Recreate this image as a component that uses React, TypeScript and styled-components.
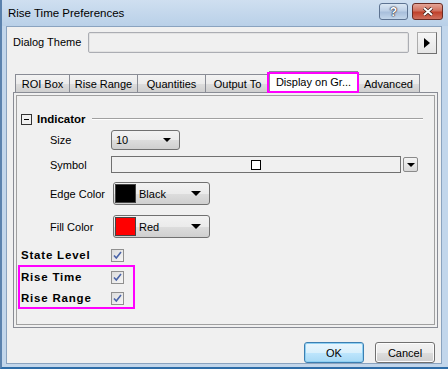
import React from 'react';
import styled, { createGlobalStyle } from 'styled-components';

const GlobalStyle = createGlobalStyle`
  html, body { margin: 0; padding: 0; background: #f0f0f0; }
  body { font-family: "Liberation Sans", Arial, sans-serif; }
`;

const FONT = '"Liberation Sans", Arial, sans-serif';

const Window = styled.div`
  position: relative;
  width: 448px;
  height: 369px;
  box-sizing: border-box;
  display: flex;
  flex-direction: column;
  background: #c2d6eb;
  border-left: 2px solid #5b82ad;
  border-bottom: 2px solid #2e6da8;
  font-family: ${FONT};
  font-size: 11px;
  color: #000;
  overflow: hidden;
`;

const TitleBar = styled.div`
  height: 26px;
  flex: none;
  display: flex;
  align-items: center;
  padding: 0 5px 0 6px;
  background: linear-gradient(#cfdff0, #b9d0e8);
`;

const Title = styled.div`
  flex: 1;
  font-size: 11.5px;
  color: #000;
`;

const CaptionButton = styled.div<{ $close?: boolean }>`
  width: ${p => (p.$close ? 31 : 29)}px;
  height: 17px;
  margin-left: 4px;
  margin-top: -3px;
  border: 1px solid ${p => (p.$close ? '#6b2b23' : '#5d7391')};
  border-radius: 3px;
  display: grid;
  place-items: center;
  box-sizing: border-box;
  background: ${p =>
    p.$close
      ? 'linear-gradient(#e5a597 0%, #d0705e 45%, #c0412b 55%, #d0705e 100%)'
      : 'linear-gradient(#dbe7f3 0%, #bdd0e6 45%, #a8bfdb 55%, #c3d6ea 100%)'};
  color: #fff;
  font-weight: bold;
  font-size: 12px;
  text-shadow: 0 0 1px #223, 0 0 1px #223, 0 0 2px #334;
`;

const Client = styled.div`
  flex: 1;
  margin: 0 6px 4px 4px;
  background: #f0f0f0;
  border: 1px solid #8aa3bf;
  display: flex;
  flex-direction: column;
  padding: 5px 4px 0 6px;
  box-sizing: border-box;
`;

const ThemeRow = styled.div`
  display: flex;
  align-items: flex-start;
  height: 30px;
`;

const ThemeLabel = styled.div`
  width: 75px;
  padding-top: 4px;
`;

const ThemeBox = styled.div`
  width: 320px;
  height: 19px;
  border: 1px solid #abadb3;
  border-radius: 2px;
  background: #f0f0f0;
  box-shadow: inset 0 0 0 1px #e3e3e3;
`;

const ArrowButton = styled.div`
  margin-left: 8px;
  width: 20px;
  height: 22px;
  box-sizing: border-box;
  border: 1px solid #acacac;
  border-right-color: #707070;
  border-bottom-color: #707070;
  background: linear-gradient(#f6f6f6, #e5e5e5);
  display: grid;
  place-items: center;
`;

const TabStrip = styled.div`
  display: flex;
  align-items: flex-end;
  height: 22px;
  margin-left: 2px;
  margin-top: 8px;
  position: relative;
  z-index: 1;
`;

const Tab = styled.div<{ $active?: boolean; $w: number }>`
  width: ${p => p.$w}px;
  height: ${p => (p.$active ? 22 : 19)}px;
  box-sizing: border-box;
  display: flex;
  align-items: center;
  justify-content: center;
  border: 1px solid #898c95;
  border-bottom: ${p => (p.$active ? '1px solid #fff' : '1px solid #898c95')};
  margin-left: -1px;
  margin-bottom: -1px;
  background: ${p => (p.$active ? '#fff' : 'linear-gradient(#f3f3f3, #ebebeb 50%, #dddddd 51%, #cfcfcf)')};
  white-space: nowrap;
  &:first-child { margin-left: 0; }
`;

const Panel = styled.div`
  width: 425px;
  height: 236px;
  box-sizing: border-box;
  border: 1px solid #898c95;
  background: #f0f0f0;
  padding: 2px;
`;

const Frame = styled.div`
  height: 100%;
  box-sizing: border-box;
  border: 1px solid #a0a0a0;
  padding: 16px 0 0 4px;
  display: flex;
  flex-direction: column;
`;

const GroupHead = styled.div`
  display: flex;
  align-items: center;
  height: 14px;
  margin-right: 11px;
`;

const Toggle = styled.div`
  width: 11px;
  height: 11px;
  box-sizing: border-box;
  border: 1px solid #333;
  position: relative;
  margin-right: 5px;
  &::after {
    content: '';
    position: absolute;
    left: 2px;
    right: 2px;
    top: 4px;
    height: 1px;
    background: #000;
  }
`;

const Bold = styled.div<{ $ls?: number }>`
  font-weight: bold;
  font-size: 11.5px;
  letter-spacing: ${p => p.$ls ?? 0}px;
`;

const Rule = styled.div`
  flex: 1;
  height: 0;
  margin-left: 6px;
  border-top: 1px solid #a0a0a0;
  border-bottom: 1px solid #fff;
`;

const Field = styled.div<{ $h: number; $mt: number }>`
  display: flex;
  align-items: center;
  height: ${p => p.$h}px;
  margin-top: ${p => p.$mt}px;
  padding-left: 29px;
`;

const FieldLabel = styled.div<{ $w?: number }>`
  width: ${p => p.$w ?? 61}px;
  flex: none;
`;

const Combo = styled.div<{ $w: number }>`
  width: ${p => p.$w}px;
  height: 100%;
  box-sizing: border-box;
  border: 1px solid #707070;
  border-radius: 3px;
  background: linear-gradient(#f2f2f2, #ebebeb 50%, #dddddd 51%, #cfcfcf);
  display: flex;
  align-items: center;
  padding: 0 2px 0 1px;
`;

const ComboText = styled.div`
  flex: 1;
  padding-left: 3px;
`;

const Caret = styled.div<{ $size?: number; $mr?: number }>`
  width: 0;
  height: 0;
  border-left: ${p => p.$size ?? 4}px solid transparent;
  border-right: ${p => p.$size ?? 4}px solid transparent;
  border-top: ${p => p.$size ?? 4}px solid #000;
  margin-right: ${p => p.$mr ?? 6}px;
`;

const Swatch = styled.div<{ $c: string }>`
  width: 21px;
  height: 19px;
  box-sizing: border-box;
  border: 1px solid #444;
  background: ${p => p.$c};
`;

const SymbolBox = styled.div`
  width: 290px;
  height: 100%;
  box-sizing: border-box;
  border: 1px solid #707070;
  display: flex;
  align-items: center;
  padding-left: 139px;
`;

const Square = styled.div`
  width: 10px;
  height: 10px;
  box-sizing: border-box;
  border: 1px solid #000;
  background: #fff;
`;

const SmallDrop = styled.div`
  width: 15px;
  height: 15px;
  box-sizing: border-box;
  margin-left: 2px;
  border: 1px solid #8a8a8a;
  border-radius: 2px;
  background: linear-gradient(#f4f4f4, #d9d9d9);
  display: grid;
  place-items: center;
`;

const CheckRow = styled.div<{ $mt: number }>`
  display: flex;
  align-items: center;
  height: 14px;
  margin-top: ${p => p.$mt}px;
`;

const CheckLabel = styled(Bold)`
  width: 90px;
`;

const CheckBox = styled.div`
  width: 13px;
  height: 13px;
  box-sizing: border-box;
  border: 1px solid #8f8f8f;
  background: linear-gradient(135deg, #dcdcdc, #f6f6f6);
  display: grid;
  place-items: center;
`;

const ButtonRow = styled.div`
  display: flex;
  justify-content: flex-end;
  gap: 11px;
  margin-top: 14px;
  padding-right: 2px;
`;

const Button = styled.div<{ $default?: boolean }>`
  width: 60px;
  height: 21px;
  box-sizing: border-box;
  border: 1px solid ${p => (p.$default ? '#3c7fb1' : '#707070')};
  border-radius: 3px;
  display: grid;
  place-items: center;
  background: ${p =>
    p.$default
      ? 'linear-gradient(#eaf6fd, #d9f0fc 50%, #bee6fd 51%, #a7d9f5)'
      : 'linear-gradient(#f2f2f2, #ebebeb 50%, #dddddd 51%, #cfcfcf)'};
  box-shadow: ${p => (p.$default ? 'inset 0 0 0 1px #8fd0f3' : 'inset 0 0 0 1px #fcfcfc')};
`;

const Highlight = styled.div`
  position: absolute;
  z-index: 5;
  border: 2px solid #ff00ff;
  pointer-events: none;
`;

const Check = () => (
  <svg width="9" height="9" viewBox="0 0 9 9">
    <path d="M1 4.5 L3.3 7 L8 1" fill="none" stroke="#4a64a8" strokeWidth="1.6" />
  </svg>
);

const tabs: [string, number][] = [
  ['ROI Box', 55],
  ['Rise Range', 69],
  ['Quantities', 69],
  ['Output To', 65],
  ['Display on Gr...', 89],
  ['Advanced', 63],
];

export default function App() {
  return (
    <Window>
      <GlobalStyle />
      <TitleBar>
        <Title>Rise Time Preferences</Title>
        <CaptionButton>?</CaptionButton>
        <CaptionButton $close>
          <svg width="12" height="9" viewBox="0 0 12 9">
            <path d="M2 1 L10 8 M10 1 L2 8" stroke="#3a1a14" strokeWidth="3.4" />
            <path d="M2 1 L10 8 M10 1 L2 8" stroke="#fff" strokeWidth="2" />
          </svg>
        </CaptionButton>
      </TitleBar>
      <Client>
        <ThemeRow>
          <ThemeLabel>Dialog Theme</ThemeLabel>
          <ThemeBox />
          <ArrowButton>
            <svg width="6" height="10" viewBox="0 0 6 10">
              <path d="M0 0 L6 5 L0 10 Z" fill="#000" />
            </svg>
          </ArrowButton>
        </ThemeRow>
        <TabStrip>
          {tabs.map(([t, w]) => (
            <Tab key={t} $w={w} $active={t.startsWith('Display')}>
              {t}
            </Tab>
          ))}
        </TabStrip>
        <Panel>
          <Frame>
            <GroupHead>
              <Toggle />
              <Bold>Indicator</Bold>
              <Rule />
            </GroupHead>
            <Field $h={20} $mt={4}>
              <FieldLabel>Size</FieldLabel>
              <Combo $w={69}>
                <ComboText>10</ComboText>
                <Caret $size={4} />
              </Combo>
            </Field>
            <Field $h={17} $mt={6}>
              <FieldLabel>Symbol</FieldLabel>
              <SymbolBox>
                <Square />
              </SymbolBox>
              <SmallDrop>
                <Caret $size={4} $mr={0} />
              </SmallDrop>
            </Field>
            <Field $h={23} $mt={9}>
              <FieldLabel $w={63}>Edge Color</FieldLabel>
              <Combo $w={97}>
                <Swatch $c="#000" />
                <ComboText>Black</ComboText>
                <Caret $size={5} />
              </Combo>
            </Field>
            <Field $h={23} $mt={10}>
              <FieldLabel $w={63}>Fill Color</FieldLabel>
              <Combo $w={97}>
                <Swatch $c="#ff0000" />
                <ComboText>Red</ComboText>
                <Caret $size={5} />
              </Combo>
            </Field>
            <CheckRow $mt={10}>
              <CheckLabel $ls={0.8}>State Level</CheckLabel>
              <CheckBox>
                <Check />
              </CheckBox>
            </CheckRow>
            <CheckRow $mt={8}>
              <CheckLabel $ls={0.8}>Rise Time</CheckLabel>
              <CheckBox>
                <Check />
              </CheckBox>
            </CheckRow>
            <CheckRow $mt={7}>
              <CheckLabel $ls={0.8}>Rise Range</CheckLabel>
              <CheckBox>
                <Check />
              </CheckBox>
            </CheckRow>
          </Frame>
        </Panel>
        <ButtonRow>
          <Button $default>OK</Button>
          <Button>Cancel</Button>
        </ButtonRow>
      </Client>
      <Highlight style={{ left: 265, top: 72, width: 88, height: 17 }} />
      <Highlight style={{ left: 16, top: 265, width: 113, height: 40 }} />
    </Window>
  );
}
